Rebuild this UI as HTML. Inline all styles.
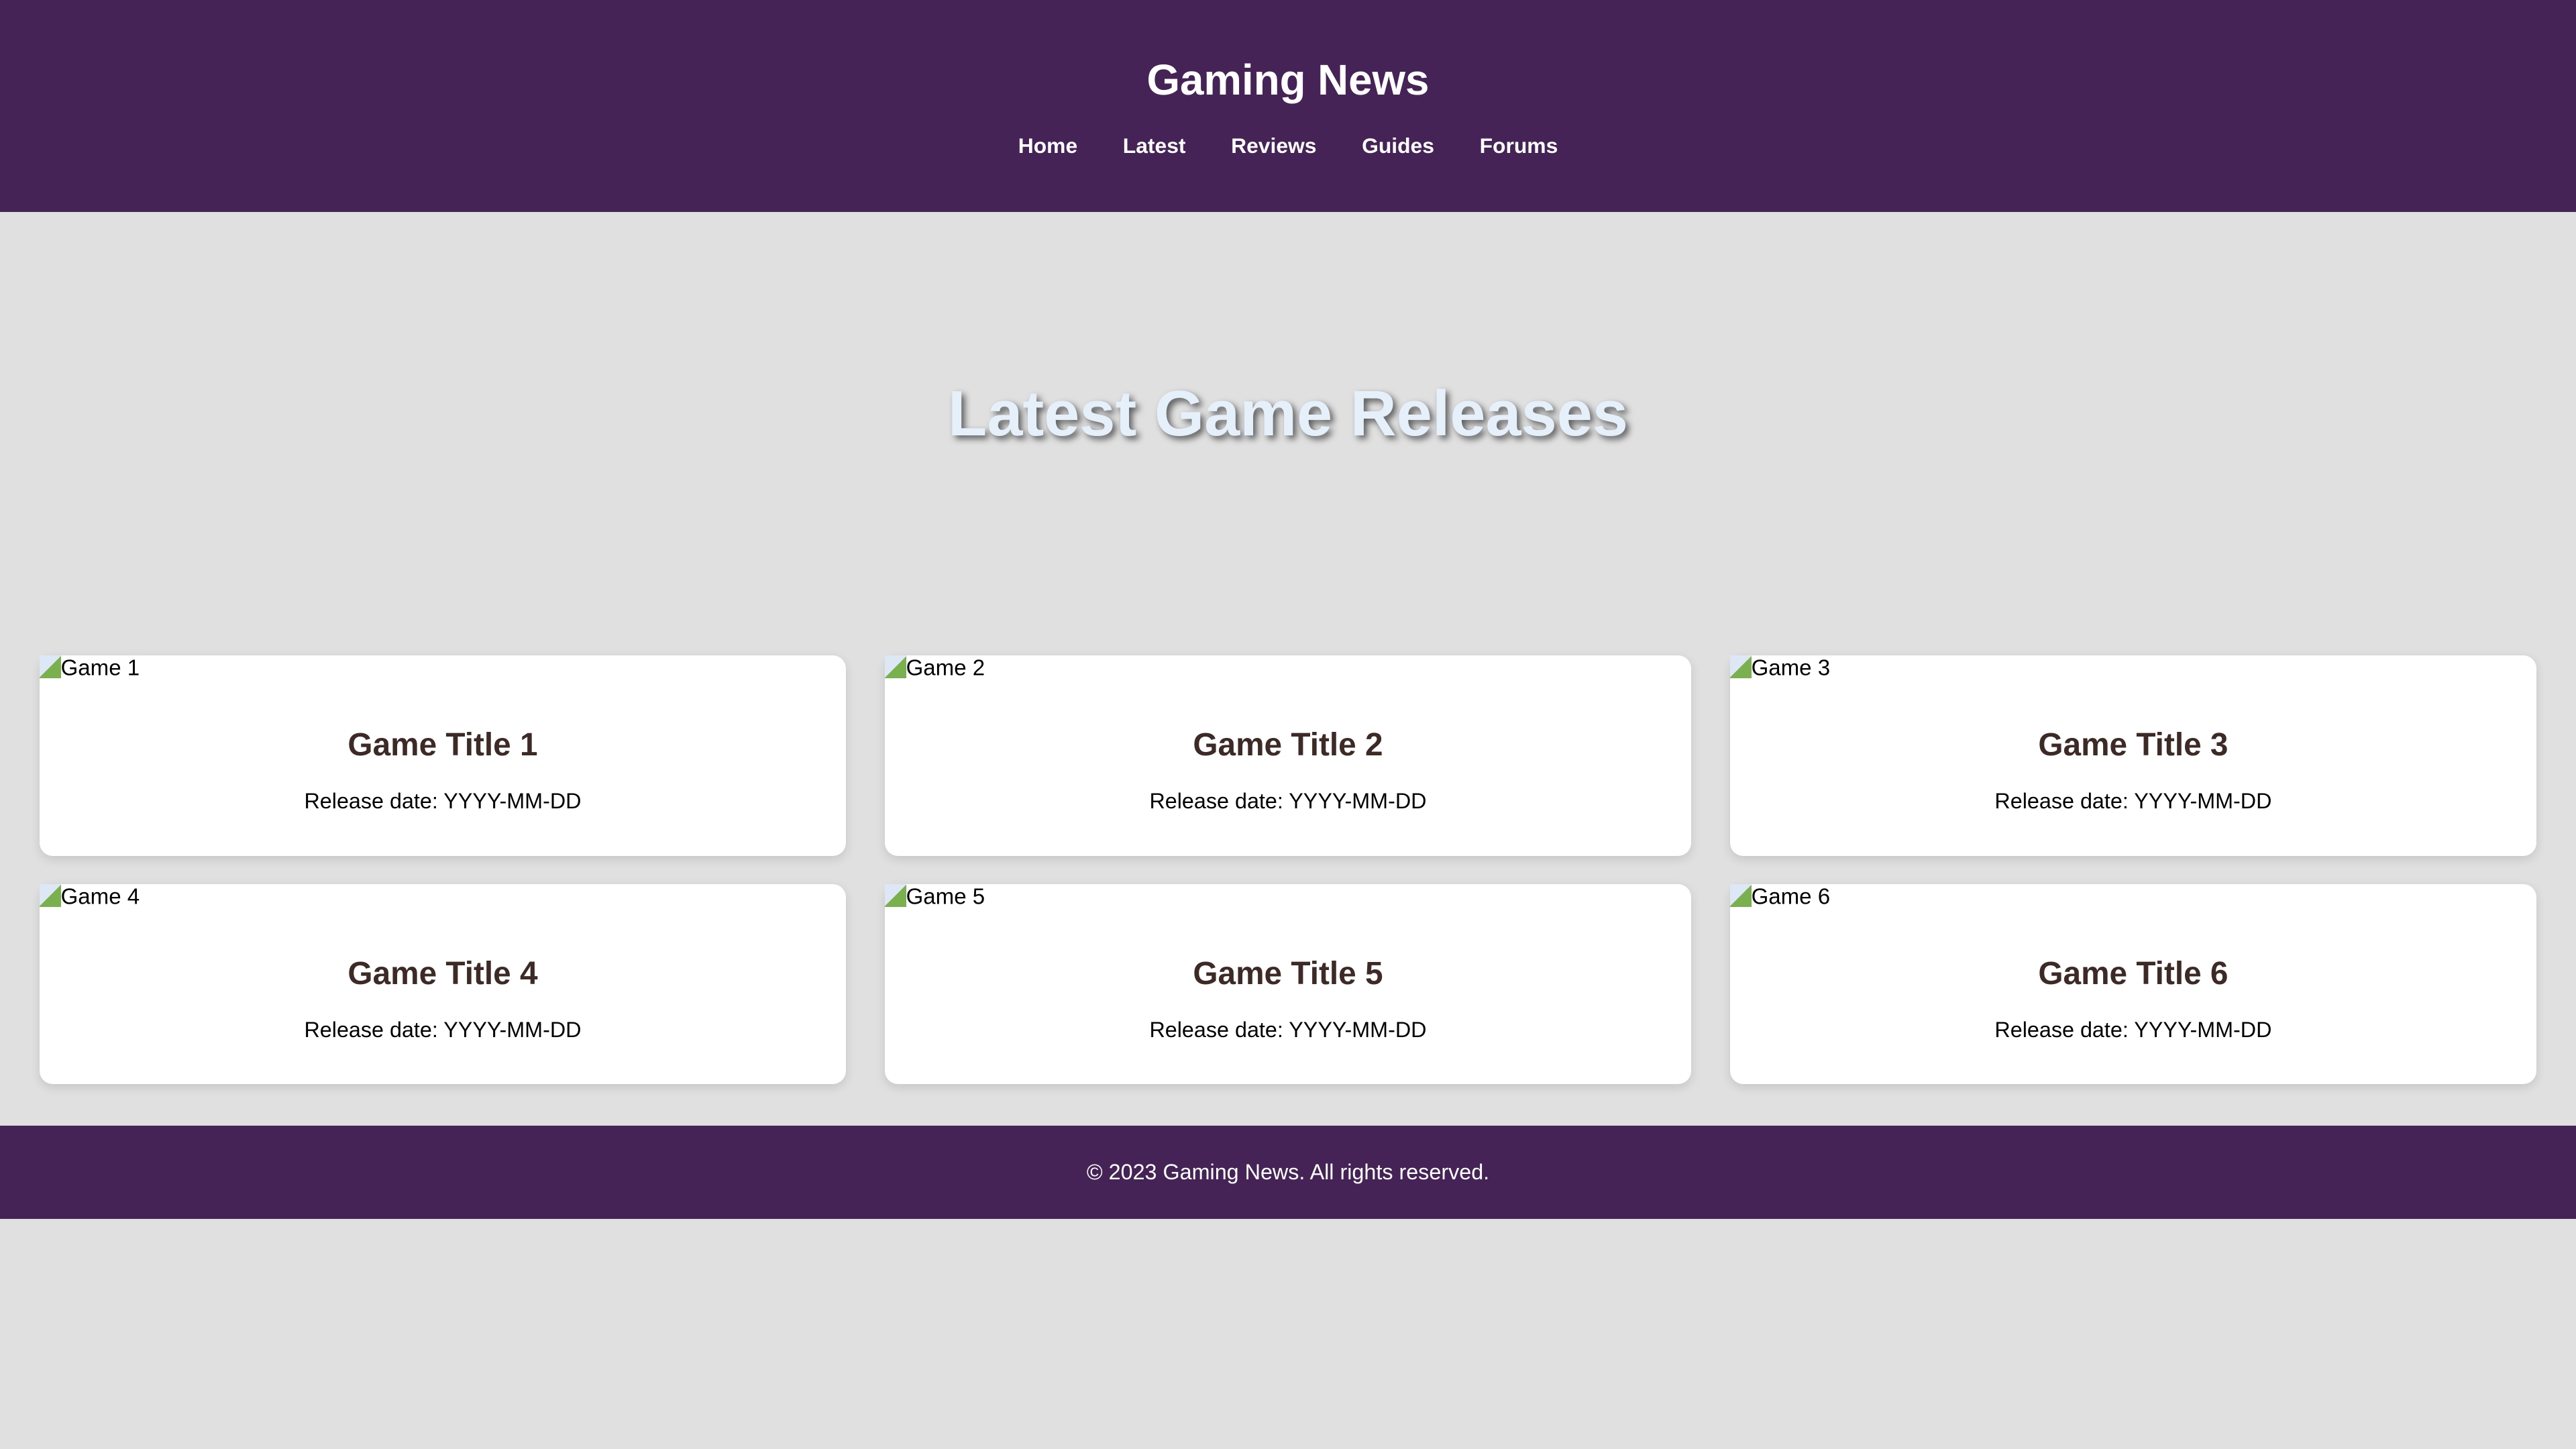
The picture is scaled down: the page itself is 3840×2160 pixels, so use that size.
<!DOCTYPE html>
<html><head><meta charset="utf-8"><style>
html{zoom:2.44898}
body{margin:0;width:1568px;height:882px;background:#e0e0e0;font-family:"Liberation Sans",Arial,sans-serif;overflow:hidden}
header{background:#462356;height:129px;text-align:center;color:#fff}
header h1{margin:0;padding-top:33px;font-size:26px;line-height:32px}
nav{margin-top:16px;font-size:13px;font-weight:bold;line-height:16px}
nav span{margin:0 12px}
.hero{height:270px;text-align:center}
.hero h2{margin:0;padding-top:100px;font-size:39px;line-height:46px;color:#e6f0fa;text-shadow:2px 2px 4px rgba(0,0,0,.6)}
.grid{display:grid;grid-template-columns:repeat(3,491px);column-gap:23.5px;row-gap:17px;padding:0 24px}
.card{background:#fff;border-radius:8px;height:122px;box-shadow:0 2px 6px rgba(0,0,0,.12);position:relative;text-align:center}
.alt{position:absolute;left:0;top:0;font-size:13.5px;line-height:15px;text-align:left}
.alt i{display:inline-block;width:13px;height:14px;background:linear-gradient(135deg,#dde7f5 50%,#7ab04e 50%);vertical-align:-2px}
.card h3{margin:0;padding-top:43px;font-size:19.5px;line-height:24px;color:#3d2a26}
.card p{margin:14px 0 0;font-size:13.2px;line-height:16px}
footer{margin-top:25px;background:#462356;height:57px;color:#fff;text-align:center;font-size:13.2px;line-height:57px}
</style></head><body>
<header><h1>Gaming News</h1><nav><span>Home</span> <span>Latest</span> <span>Reviews</span> <span>Guides</span> <span>Forums</span></nav></header>
<div class="hero"><h2>Latest Game Releases</h2></div>
<div class="grid">
<div class="card"><div class="alt"><i></i>Game 1</div><h3>Game Title 1</h3><p>Release date: YYYY-MM-DD</p></div>
<div class="card"><div class="alt"><i></i>Game 2</div><h3>Game Title 2</h3><p>Release date: YYYY-MM-DD</p></div>
<div class="card"><div class="alt"><i></i>Game 3</div><h3>Game Title 3</h3><p>Release date: YYYY-MM-DD</p></div>
<div class="card"><div class="alt"><i></i>Game 4</div><h3>Game Title 4</h3><p>Release date: YYYY-MM-DD</p></div>
<div class="card"><div class="alt"><i></i>Game 5</div><h3>Game Title 5</h3><p>Release date: YYYY-MM-DD</p></div>
<div class="card"><div class="alt"><i></i>Game 6</div><h3>Game Title 6</h3><p>Release date: YYYY-MM-DD</p></div>
</div>
<footer>© 2023 Gaming News. All rights reserved.</footer>
</body></html>
